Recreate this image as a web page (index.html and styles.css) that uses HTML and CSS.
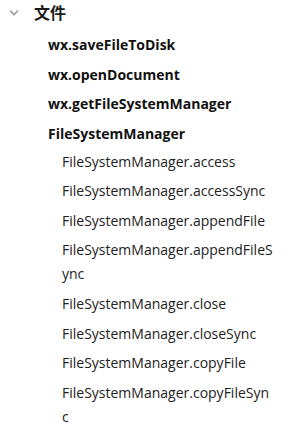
FILE: index.html
```
<!DOCTYPE html>
<html lang="zh">
<head>
<meta charset="utf-8">
<link rel="stylesheet" href="styles.css">
</head>
<body>
<nav class="tree">
  <div class="group-head">
    <svg class="chev" width="10" height="7" viewBox="0 0 10 7"><path d="M1 1.5 L5 5.5 L9 1.5" fill="none" stroke="#9a9a9a" stroke-width="1.6"/></svg>
    <span class="group-title">文件</span>
  </div>
  <ul class="level1">
    <li class="l1">wx.saveFileToDisk</li>
    <li class="l1">wx.openDocument</li>
    <li class="l1">wx.getFileSystemManager</li>
    <li class="l1">FileSystemManager</li>
  </ul>
  <ul class="level2">
    <li class="l2">FileSystemManager.access</li>
    <li class="l2">FileSystemManager.accessSync</li>
    <li class="l2">FileSystemManager.appendFile</li>
    <li class="l2">FileSystemManager.appendFileSync</li>
    <li class="l2">FileSystemManager.close</li>
    <li class="l2">FileSystemManager.closeSync</li>
    <li class="l2">FileSystemManager.copyFile</li>
    <li class="l2">FileSystemManager.copyFileSync</li>
  </ul>
</nav>
</body>
</html>
```
FILE: styles.css
```
html, body {
  margin: 0;
  padding: 0;
  background: #ffffff;
}
body {
  font-family: "Open Sans", "Noto Sans CJK SC", sans-serif;
  color: #1a1a1a;
  overflow: hidden;
}
.tree {
  width: 295px;
}
.group-head {
  display: flex;
  align-items: center;
  height: 24px;
  padding-left: 9px;
}
.chev {
  display: block;
  margin-right: 15px;
}
.group-title {
  font-family: "Noto Sans CJK SC", sans-serif;
  font-size: 16px;
  font-weight: 700;
  line-height: 24px;
}
ul {
  list-style: none;
  margin: 0;
  padding: 0;
}
.level1 {
  padding-left: 48px;
  padding-top: 6px;
}
.l1 {
  font-size: 14px;
  font-weight: 700;
  line-height: 29.6px;
  color: #111;
}
.level2 {
  padding-left: 62px;
  width: 213px;
  margin-top: -1.6px;
}
.l2 {
  font-size: 14px;
  line-height: 24px;
  padding: 2.8px 0;
  color: #222;
  word-break: break-all;
}
```
